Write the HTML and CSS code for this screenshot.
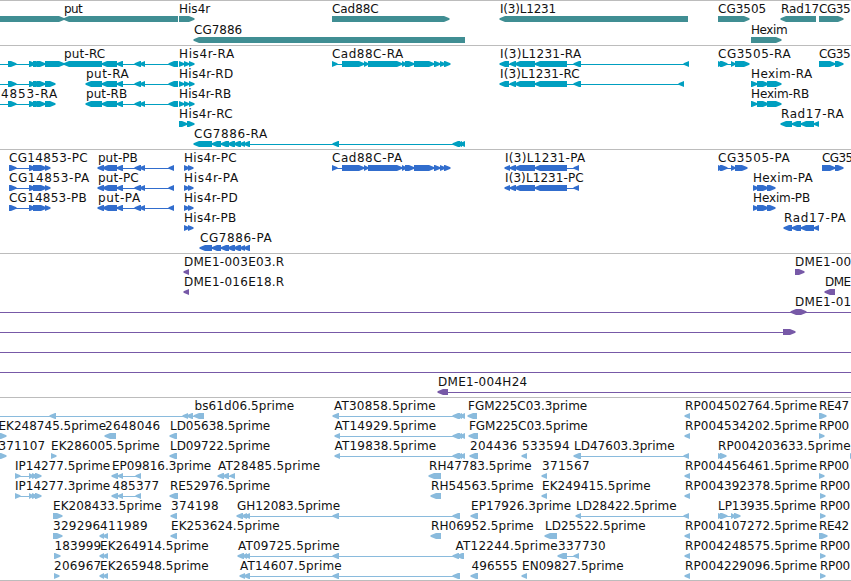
FILE: index.html
```html
<!DOCTYPE html>
<html lang="en">
<head>
<meta charset="utf-8">
<title>Genome browser</title>
<link rel="stylesheet" href="styles.css">
</head>
<body>
<main class="browser">
<section class="track genes" id="genes"></section>
<section class="track transcripts" id="transcripts"></section>
<section class="track proteins" id="proteins"></section>
<section class="track clones" id="clones"></section>
<section class="track ests" id="ests"></section>
</main>
<script src="tracks.js"></script>
</body>
</html>
```
FILE: styles.css
```css
body {
  margin: 0;
  background: #fff;
  overflow: hidden;
}
.browser {
  display: flex;
  flex-direction: column;
  width: 851px;
  height: 581px;
  box-sizing: border-box;
  border-bottom: 1px solid #bcbcbc;
  overflow: hidden;
}
.track {
  display: flex;
  flex-direction: column;
  border-top: 1px solid #bcbcbc;
  padding-bottom: 3px;
}
.genes, .ests { padding-bottom: 2px; }
.row {
  display: block;
  width: 851px;
  height: 20px;
  overflow: visible;
}
.genes .row { height: 21px; }
.row text {
  font-family: "DejaVu Sans", sans-serif;
  font-size: 12px;
  fill: #111;
}
.genes { color: #408e93; }
.transcripts { color: #009fc0; }
.proteins { color: #316dcd; }
.clones { color: #7759a7; }
.ests { color: #8abbdd; }
.shape { fill: currentColor; }
```
FILE: tracks.js
```js
// Each row is a list of features: [label, labelStart, labelEnd, shapes].
// Shapes: ">a-b" forward exon, "<a-b" reverse exon, "=a-b" intron line, "*a-b" exon pointed at both ends.
const cg = ">8-16 >29-35 >33-41 >37-45";
const putTail = "<102-117 <117-123 <135-141 <140-145 <169-178 =102-178";
const his = ">179-184 >184-189 >189-194";
const cad = "=332-449 >332-337 >342-364 >364-368 >368-402 >402-406 >405-414 >414-434 >434-440 >440-445 >444-450";
const i3 = "<500-509 <510-516 <515-535 <535-567 <574-581";
const cgP = "=9-50 >9-16 >29-35 >33-42 >37-46 >45-50";
const putP = "=98-174 <98-104 <103-117 <117-123 <135-141 <140-145 <169-174";
const i3P = "=505-579 <505-510 <510-516 <515-535 <535-567 <574-579";
const hisP = ">184-189 >188-193";
const hexR = ">751-757 >757-768 >767-781";
const hexP = ">753-758 >757-768 >767-775";
const cg7886 = "<212-221 <221-229 <228-235 <234-241 <240-245 <244-250";
const ip = "=15-41 >15-20 >29-33 >32-37 >35-41";
const ep = "=112-141 <112-118 <118-123 <136-141";
const at = "<453-460 <457-462 <460-465";
const rp = "<685-690";
const tracks = {
  genes: [
    [["put",64.5,82.5,">-10-64 <64-178"],["His4r",179.5,210,">179-194"],["Cad88C",332.5,378.5,">332-449"],["I(3)L1231",500.5,556,"<500-688"],["CG3505",718.5,766,">718-749"],["Rad17",781.5,819,"<781-816"],["CG35",819.5,850.5,">819-843"]],
    [["CG7886",194.5,242,"<194-465"],["Hexim",751.5,787.5,">751-781"]]
  ],
  transcripts: [
    [["put-RC",64.5,105,"=0-64 "+cg+" >45-64 <64-102 "+putTail],["His4r-RA",179.5,234,his],["Cad88C-RA",332.5,403,cad],["I(3)L1231-RA",500.5,581,"=500-689 "+i3+" <684-689"],["CG3505-RA",718.5,790.5,"=718-735 >718-723 >720-727 >731-735 >735-749"],["CG35",819.5,850.5,"=819-843 >819-835 >835-843"]],
    [["put-RA",86.5,128.5,"=0-54 "+cg+" >45-55 <86-102 "+putTail],["His4r-RD",179.5,233,his],["I(3)L1231-RC",500.5,579.5,"=500-684 "+i3+" <679-684"],["Hexim-RA",751.5,812,hexR]],
    [["4853-RA",1.5,57,"=0-54 "+cg+" >45-55"],["put-RB",86.5,127,"<86-102 "+putTail],["His4r-RB",179.5,231,his],["Hexim-RB",751.5,809,hexR]],
    [["His4r-RC",179.5,232.5,">179-187 >187-194"],["Rad17-RA",781.5,843.5,"<781-792 <792-801 <801-814 <814-819"]],
    [["CG7886-RA",194.5,267,"=194-465 <194-212 "+cg7886+" <333-339 "+at]]
  ],
  proteins: [
    [["CG14853-PC",9.5,87.5,cgP],["put-PB",98.5,137.5,putP],["His4r-PC",184.5,236.5,hisP],["Cad88C-PA",332.5,402,cad],["I(3)L1231-PA",505.5,585,i3P],["CG3505-PA",718.5,789.5,"=718-735 >718-723 >720-727 >731-735 >735-747"],["CG35",822.5,853,"=822-843 >822-835 >835-843"]],
    [["CG14853-PA",9.5,89,cgP],["put-PC",98.5,138.5,putP],["His4r-PA",184.5,238,hisP],["I(3)L1231-PC",505.5,583.5,i3P],["Hexim-PA",753.5,812.5,hexP]],
    [["CG14853-PB",9.5,86.5,cgP],["put-PA",98.5,140,putP],["His4r-PD",184.5,237.5,hisP],["Hexim-PB",753.5,810,hexP]],
    [["His4r-PB",184.5,236,hisP],["Rad17-PA",784.5,845.5,"<784-792 <792-801 <801-814 <814-819"]],
    [["CG7886-PA",200.5,271.5,"<200-212 "+cg7886]]
  ],
  clones: [
    [["DME1-003E03.R",184.5,284,"<184-189"],["DME1-00",795.5,851,">795-804"]],
    [["DME1-016E18.R",184.5,284,"<184-189"],["DME",825.5,851,"<825-835"]],
    [["DME1-01",795.5,851,"=0-851 *791-806"]],
    [["",0,0,"=0-795 >783-795"]],
    [["",0,0,"=0-851"]],
    [["",0,0,"=0-851"]],
    [["DME1-004H24",438.5,527,"=438-851 <438-448"]]
  ],
  ests: [
    [["bs61d06.5prime",195,294,"=0-199 <50-56 <183-188 <187-193 <194-204"],["AT30858.5prime",334.5,435.5,"=333-465 <333-339 "+at],["FGM225C03.3prime",468.5,587,"<468-477"],["RP004502764.5prime",685.5,817,rp],["RE47",819.5,849,">819-826"]],
    [["EK248745.5prime",-1,106,">-4-6"],["2648046",105.5,160,"<105-116"],["LD05638.5prime",170.5,270,"<170-177"],["AT14929.5prime",335,436,"=335-465 <335-340 "+at],["FGM225C03.5prime",469.5,587.5,"<469-478"],["RP004534202.5prime",685.5,817,rp],["RP00",819.5,849,">819-824"]],
    [["371107",-1,45,">-4-6"],["EK286005.5prime",51.5,159.5,">51-56"],["LD09722.5prime",170.5,270,"<170-177"],["AT19838.5prime",335,436,"=335-464 <335-340 "+at],["204436",470.5,517,"<470-478"],["533594",522.5,569.5,"<522-527"],["LD47603.3prime",574.5,674.5,"=574-689 <574-581 <684-689"],["RP004203633.5prime",718.5,850.5,">718-723 >720-726 >850-855"]],
    [["IP14277.5prime",15.5,110,ip],["EP09816.3prime",112.5,211,ep],["AT28485.5prime",218.5,320,"=218-235 <218-224 <223-229 <230-235"],["RH47783.5prime",429.5,531.5,"<429-441"],["371567",542.5,589.5,"<542-547"],["RP004456461.5prime",685.5,817,rp],["RP00",819.5,849,">819-824"]],
    [["IP14277.3prime",15.5,110,ip],["485377",113,159,ep],["RE52976.5prime",170.5,270,"<170-178"],["RH54563.5prime",431.5,533.5,"<431-441"],["EK249415.5prime",542.5,650.5,"<542-547"],["RP004392378.5prime",685.5,817,rp],["RP00",820.5,850,">820-825"]],
    [["EK208433.5prime",53.5,161.5,">53-62"],["374198",171.5,218.5,"<171-177"],["GH12083.5prime",237.5,340,"=237-460 <237-243 <242-247 <245-250 <333-339 <453-460"],["EP17926.3prime",471.5,571,"<471-478"],["LD28422.5prime",576.5,676.5,"=576-689 <576-581 <684-689"],["LP13935.5prime",718.5,816,"=718-740 >718-723 >720-727 >731-735 >734-740"],["RP00",820.5,850,">820-825"]],
    [["329296",53.5,100,">53-62"],["411989",100.5,147.5,"<100-104 <103-108"],["EK253624.5prime",171.5,279.5,"<171-177"],["RH06952.5prime",431.5,533.5,"<431-441"],["LD25522.5prime",545.5,645.5,"<545-557"],["RP004107272.5prime",685.5,817,rp],["RE42",819.5,849,">819-827"]],
    [["183999",55,101,">54-60"],["EK264914.5prime",100.5,208.5,"<100-104 <103-108"],["AT09725.5prime",238.5,339.5,"=238-464 <238-244 <243-247 <245-250 <333-339 <453-459 <457-464"],["AT12244.5prime",456,557.5,""],["337730",558.5,605.5,"=558-579 <558-567 <574-579"],["RP004248575.5prime",685.5,817,rp],["RP00",820.5,850,">820-825"]],
    [["206967",54.5,101,">54-59"],["EK265948.5prime",100.5,208.5,"<100-104 <103-108"],["AT14607.5prime",240.5,341.5,"=240-460 <240-245 <244-250 <333-339 <453-460"],["496555",472,517.5,"<471-478"],["EN09827.5prime",522.5,623.5,"<522-527"],["RP004229096.5prime",685.5,817,rp],["RP00",820.5,850,">820-825"]]
  ]
};
const NS = "http://www.w3.org/2000/svg";
function add(parent, name, attrs) {
  const el = document.createElementNS(NS, name);
  for (const key in attrs) el.setAttribute(key, attrs[key]);
  parent.appendChild(el);
  return el;
}
function drawShape(svg, spec) {
  const m = spec.match(/^(.)(-?\d+)-(\d+)$/);
  const kind = m[1], a = +m[2], b = +m[3];
  if (kind === "=") {
    add(svg, "rect", { class: "shape", x: a, y: 18, width: b - a, height: 1 });
    return;
  }
  const tip = Math.min(5, b - a);
  const left = kind === ">" ? [[a, 21], [a, 15]] : [[a + tip, 21], [a - 0.5, 18.8], [a - 0.5, 17.2], [a + tip, 15]];
  const right = kind === "<" ? [[b, 15], [b, 21]] : [[b - tip, 15], [b + 0.5, 17.2], [b + 0.5, 18.8], [b - tip, 21]];
  add(svg, "polygon", { class: "shape", points: left.concat(right).map(p => p.join(",")).join(" ") });
}
for (const id in tracks) {
  const section = document.getElementById(id);
  for (const features of tracks[id]) {
    const svg = add(section, "svg", { class: "row" });
    for (const [label, start, end, shapes] of features) {
      shapes.split(" ").filter(Boolean).forEach(s => drawShape(svg, s));
      if (label) {
        const text = add(svg, "text", { x: start - 0.5, y: 12, textLength: end - start + 0.7 });
        text.textContent = label;
      }
    }
  }
}
```
